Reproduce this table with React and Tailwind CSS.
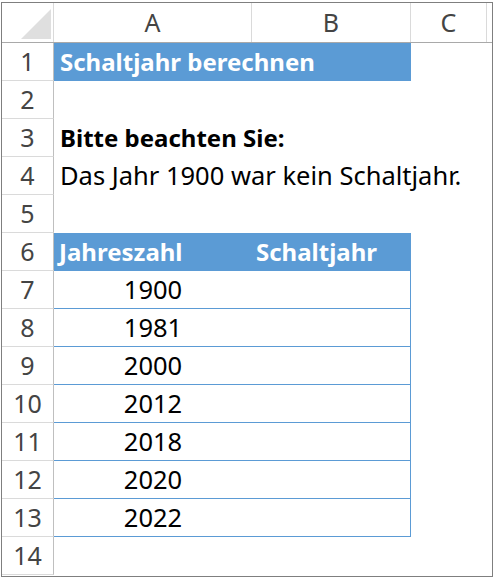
import React from 'react';

const rows = [
  { n: 1, kind: 'title', a: 'Schaltjahr berechnen' },
  { n: 2 },
  { n: 3, kind: 'bold', a: 'Bitte beachten Sie:' },
  { n: 4, kind: 'text', a: 'Das Jahr 1900 war kein Schaltjahr.' },
  { n: 5 },
  { n: 6, kind: 'head', a: 'Jahreszahl', b: 'Schaltjahr' },
  { n: 7, kind: 'year', a: '1900' },
  { n: 8, kind: 'year', a: '1981' },
  { n: 9, kind: 'year', a: '2000' },
  { n: 10, kind: 'year', a: '2012' },
  { n: 11, kind: 'year', a: '2018' },
  { n: 12, kind: 'year', a: '2020' },
  { n: 13, kind: 'year', a: '2022' },
  { n: 14 },
];

const font = { fontFamily: '"Noto Sans", "Open Sans", sans-serif' };

const Row = ({ row }) => {
  let cells = null;
  if (row.kind === 'title') {
    cells = (
      <div className="w-[357px] h-full bg-[#5b9bd5] text-white font-bold text-[24px] pl-[6px] flex items-center">
        {row.a}
      </div>
    );
  } else if (row.kind === 'bold') {
    cells = <div className="pl-[6px] h-full flex items-center font-bold text-[24px] text-black">{row.a}</div>;
  } else if (row.kind === 'text') {
    cells = <div className="pl-[6px] h-full flex items-center text-[25.5px] text-black whitespace-nowrap">{row.a}</div>;
  } else if (row.kind === 'head') {
    cells = (
      <div className="w-[357px] h-full bg-[#5b9bd5] text-white font-bold text-[24px] flex items-center">
        <div className="w-[198px] pl-[5px]">{row.a}</div>
        <div className="pl-[4px]">{row.b}</div>
      </div>
    );
  } else if (row.kind === 'year') {
    cells = (
      <div className="w-[357px] h-full border-b border-r border-[#5b9bd5] flex items-center">
        <div className="w-[198px] text-center text-[25.5px] text-black">{row.a}</div>
      </div>
    );
  }
  return (
    <div className="flex h-[38px]">
      <div className="w-[52px] shrink-0 h-full border-r border-b border-r-[#bfbfbf] border-b-[#dadada] flex items-center justify-center text-[#444]">
        {row.n}
      </div>
      <div className="flex-1 h-full">{cells}</div>
    </div>
  );
};

export default function App() {
  return (
    <div className="w-[493px] h-[577px] bg-white pt-[2px] pl-[1px] text-[25px] leading-none" style={font}>
      <div className="w-[492px] h-[575px] border border-[#7f7f7f] overflow-hidden">
        <div className="flex h-[40px] border-b border-[#a9a9a9] text-[#444]">
          <div className="w-[52px] shrink-0 border-r border-[#dadada] relative">
            <svg className="absolute left-[19px] top-[6px]" width="30" height="30" viewBox="0 0 30 30">
              <polygon points="30,0 30,30 0,30" fill="#dfdfdf" />
            </svg>
          </div>
          <div className="w-[198px] border-r border-[#dadada] flex items-center justify-center">A</div>
          <div className="w-[159px] border-r border-[#dadada] flex items-center justify-center">B</div>
          <div className="w-[76px] border-r border-[#dadada] flex items-center justify-center">C</div>
          <div className="flex-1" />
        </div>
        {rows.map((r) => (
          <Row key={r.n} row={r} />
        ))}
      </div>
    </div>
  );
}
